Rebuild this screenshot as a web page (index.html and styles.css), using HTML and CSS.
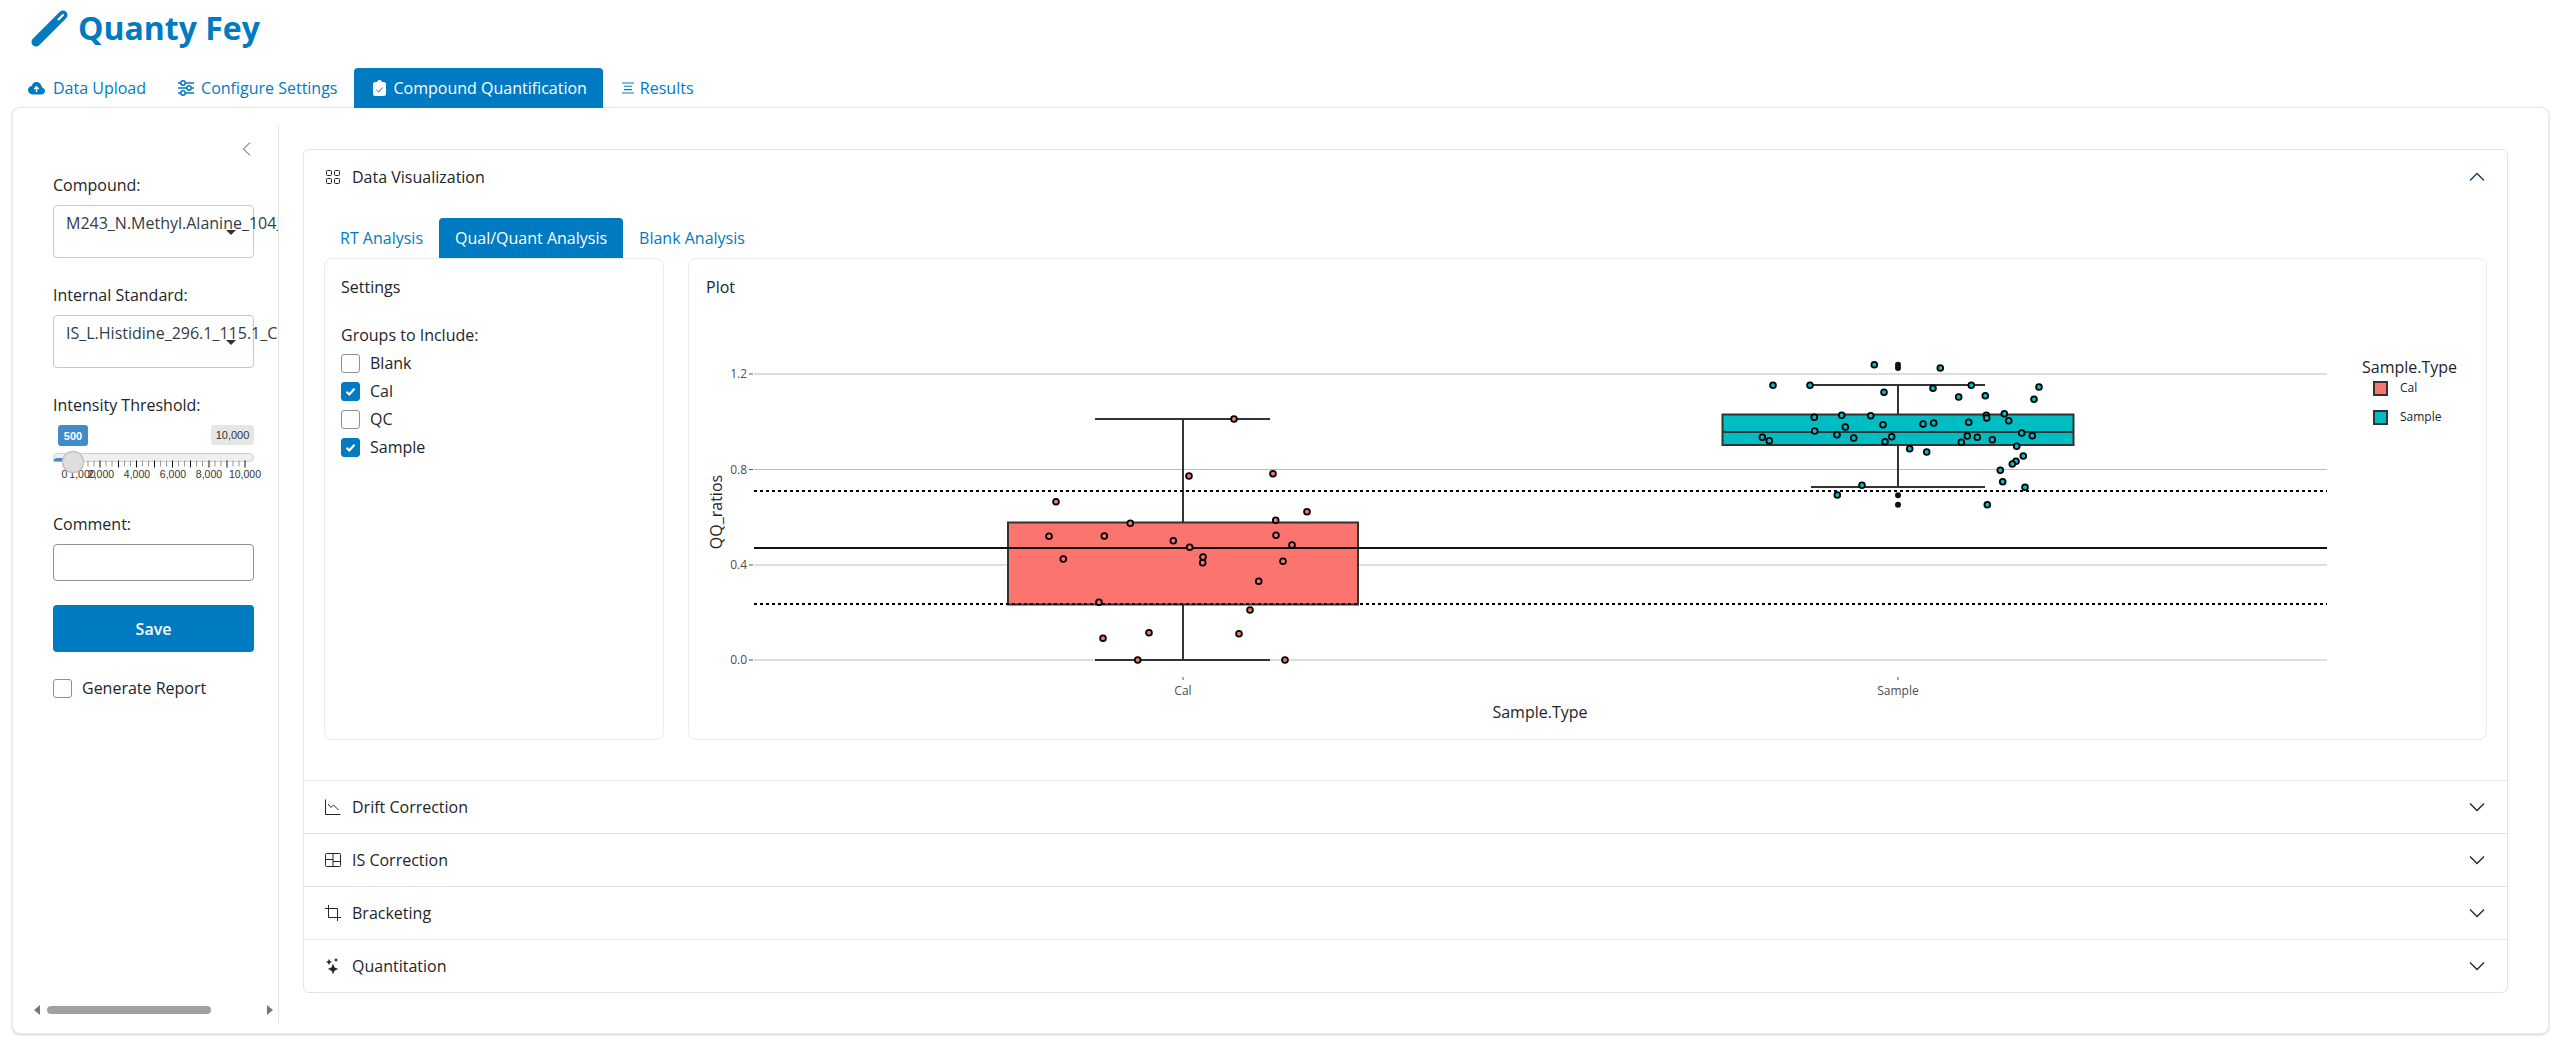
FILE: index.html
```html
<!DOCTYPE html>
<html lang="en">
<head>
<meta charset="utf-8">
<title>Quanty Fey</title>
<link rel="stylesheet" href="styles.css">
</head>
<body>
<header class="brand">
  <svg class="brand-icon" width="40" height="40" viewBox="0 0 40 40"><path class="logo-bar" d="M6 34 L33 7"/><path class="logo-slot" d="M28.500 11.500 L33 7"/></svg>
  <h1 class="brand-name">Quanty Fey</h1>
</header>
<nav class="tabs">
  <a class="tab"><svg class="tab-svg i1" width="20" height="16" viewBox="0 0 20 16"><path d="M8.500 2C6 2 4.300 3.600 3.900 5.700 1.700 6.100 0 7.900 0 10.100 0 12.500 2 14.500 4.400 14.500H13.500C15.500 14.500 17 12.900 17 11 17 9.200 15.700 7.700 14 7.500 13.600 4.400 11.400 2 8.500 2Z"/><path class="cut" d="M8.500 12V7M6.300 9 8.500 6.800 10.700 9"/></svg><span>Data Upload</span></a>
  <a class="tab"><svg class="tab-svg i2" width="18" height="16" viewBox="0 0 18 16"><path class="st" d="M0 3H16M0 8H16M0 13H16"/><circle cx="5" cy="3" r="2.200"/><circle cx="11" cy="8" r="2.200"/><circle cx="5" cy="13" r="2.200"/></svg><span>Configure Settings</span></a>
  <a class="tab tab-active"><svg class="tab-svg i3" width="19" height="16" viewBox="0 0 19 16"><path d="M5 2H7C7.300 .8 8.200 0 9.500 0S11.700 .8 12 2H14C15 2 16 3 16 4V14C16 15 15 16 14 16H5C4 16 3 15 3 14V4C3 3 4 2 5 2Z"/><path class="cut" d="M6.500 9.800 8.800 12 12.500 7.500"/></svg><span>Compound Quantification</span></a>
  <a class="tab"><svg class="tab-svg i4" width="16" height="16" viewBox="0 0 16 16"><path class="st" d="M3 3H15M5 6.300H13M5 9.600H13M3 13H15"/></svg><span>Results</span></a>
</nav>

<main class="card">
  <aside class="sidebar">
    <div class="collapse-row"><svg width="16" height="16" viewBox="0 0 16 16"><path class="chev-side" d="M11 1.500 4.500 8 11 14.500"/></svg></div>
    <div class="sidebar-form">
      <label class="field-label">Compound:</label>
      <div class="select"><span class="select-text">M243_N.Methyl.Alanine_104_44.1_Cal</span><i class="select-arrow"></i></div>
      <label class="field-label label-next">Internal Standard:</label>
      <div class="select"><span class="select-text">IS_L.Histidine_296.1_115.1_Cal</span><i class="select-arrow"></i></div>
      <label class="field-label label-next">Intensity Threshold:</label>
      <svg class="slider" width="225" height="75" viewBox="53 425 225 75">
        <rect x="58" y="425" width="30" height="21" rx="3" class="sl-from"/>
        <text x="73" y="439.500" class="sl-from-t">500</text>
        <rect x="211" y="425" width="43" height="20" rx="3" class="sl-max"/>
        <text x="232.500" y="439" class="sl-max-t">10,000</text>
        <rect x="53.500" y="453.500" width="200" height="8" rx="4" class="sl-track"/>
        <path d="M57 458H66V461.500H53.500C53.500 459.500 55 458 57 458Z" class="sl-fill"/>
        <path class="sl-minor" d="M70 460.500v6M76 460.500v6M88 460.500v6M94 460.500v6M106 460.500v6M112 460.500v6M124.500 460.500v6M130.500 460.500v6M142.500 460.500v6M148.500 460.500v6M160.500 460.500v6M166.500 460.500v6M178.500 460.500v6M184.500 460.500v6M196.500 460.500v6M202.500 460.500v6M215 460.500v6M221 460.500v6M233 460.500v6M239 460.500v6"/>
        <path class="sl-major" d="M64 460.500v7M82 460.500v7M100 460.500v7M118.500 460.500v7M136.500 460.500v7M154.500 460.500v7M172.500 460.500v7M190.500 460.500v7M209 460.500v7M227 460.500v7M245 460.500v7"/>
        <text x="64.500" y="478" class="sl-t">0</text><text x="82.500" y="478" class="sl-t">1,000</text><text x="101" y="478" class="sl-t">2,000</text><text x="137" y="478" class="sl-t">4,000</text><text x="173" y="478" class="sl-t">6,000</text><text x="209" y="478" class="sl-t">8,000</text><text x="245" y="478" class="sl-t">10,000</text>
        <circle cx="73" cy="462" r="10.500" class="sl-handle"/>
      </svg>
      <label class="field-label">Comment:</label>
      <input class="text-input" type="text" aria-label="Comment">
      <button class="save" type="button">Save</button>
      <div class="report"><span class="box"></span><span>Generate Report</span></div>
    </div>
    <div class="scrollbar"><i class="sb-left"></i><div class="sb-track"><div class="sb-thumb"></div></div><i class="sb-right"></i></div>
  </aside>

  <section class="content">
    <div class="accordion">
      <div class="acc-item acc-open">
        <div class="acc-head">
          <svg class="acc-icon" width="16" height="16" viewBox="0 0 16 16"><rect x="1.500" y="1.500" width="5" height="5" rx="1"/><rect x="9.500" y="1.500" width="5" height="5" rx="1"/><rect x="1.500" y="9.500" width="5" height="5" rx="1"/><rect x="9.500" y="9.500" width="5" height="5" rx="1"/></svg>
          <span class="acc-title">Data Visualization</span>
          <svg class="acc-chev acc-chev-open" width="16" height="16" viewBox="0 0 16 16"><path d="M1 11.500 8 4.500 15 11.500"/></svg>
        </div>
        <div class="acc-body">
          <div class="subtabs">
            <a class="subtab">RT Analysis</a>
            <a class="subtab subtab-active">Qual/Quant Analysis</a>
            <a class="subtab">Blank Analysis</a>
          </div>
          <div class="panels">
            <div class="panel panel-settings">
              <div class="panel-title">Settings</div>
              <div class="group-label">Groups to Include:</div>
              <div class="check-row"><span class="box"></span><span>Blank</span></div>
              <div class="check-row"><span class="box box-on"><svg width="13" height="13" viewBox="0 0 13 13"><path d="M2.500 6.800 5.300 9.500 10.500 3.800"/></svg></span><span>Cal</span></div>
              <div class="check-row"><span class="box"></span><span>QC</span></div>
              <div class="check-row"><span class="box box-on"><svg width="13" height="13" viewBox="0 0 13 13"><path d="M2.500 6.800 5.300 9.500 10.500 3.800"/></svg></span><span>Sample</span></div>
            </div>
            <div class="panel panel-plot">
              <div class="panel-title">Plot</div>
              <svg class="plot" width="1796" height="430" viewBox="689 305 1796 430">
                <g class="grid"><path d="M754 374H2327M754 469.500H2327M754 565H2327M754 660H2327"/></g>
                <g class="ticks"><path d="M749 374H753M749 469.500H753M749 565H753M749 660H753M1183 677V680M1898 677V680"/></g>
                <text x="747" y="378" class="tk tk-y">1.2</text><text x="747" y="473.500" class="tk tk-y">0.8</text><text x="747" y="569" class="tk tk-y">0.4</text><text x="747" y="664" class="tk tk-y">0.0</text>
                <text x="1183" y="695" class="tk tk-x">Cal</text><text x="1898" y="695" class="tk tk-x">Sample</text>
                <text x="1540" y="718" class="ax ax-x">Sample.Type</text>
                <text transform="translate(722 512) rotate(-90)" class="ax ax-x">QQ_ratios</text>
                <g class="bx">
                  <path d="M1183 419V522M1183 604.500V660M1095 419H1270M1095 660H1270"/>
                  <rect x="1008" y="522.500" width="350" height="82" class="f-cal"/>
                  <path d="M1898 385V414M1898 445V487M1811 385H1985M1811 487H1985"/>
                  <rect x="1722.500" y="414.500" width="351" height="30.500" class="f-sam"/>
                  <path d="M1722.500 432H2073.500"/>
                </g>
                <path class="solid" d="M754 548H2327"/>
                <path class="dotted" d="M754 491H2327M754 604H2327"/>
                <g class="pts-cal">
                  <circle cx="1056" cy="501.700" r="2.600"/><circle cx="1049" cy="536.300" r="2.600"/><circle cx="1104.300" cy="536" r="2.600"/><circle cx="1130.300" cy="523.300" r="2.600"/><circle cx="1173.300" cy="540.700" r="2.600"/><circle cx="1189.700" cy="547.300" r="2.600"/><circle cx="1203" cy="557" r="2.600"/><circle cx="1202.700" cy="562.700" r="2.600"/><circle cx="1063.300" cy="559" r="2.600"/><circle cx="1099" cy="602.300" r="2.600"/><circle cx="1275.700" cy="520.300" r="2.600"/><circle cx="1307" cy="511.700" r="2.600"/><circle cx="1276" cy="535.300" r="2.600"/><circle cx="1292" cy="545" r="2.600"/><circle cx="1283" cy="561.300" r="2.600"/><circle cx="1258.700" cy="581.300" r="2.600"/><circle cx="1250" cy="610" r="2.600"/><circle cx="1239" cy="633.700" r="2.600"/><circle cx="1149" cy="632.700" r="2.600"/><circle cx="1103" cy="638.300" r="2.600"/><circle cx="1137.700" cy="660" r="2.600"/><circle cx="1285" cy="660" r="2.600"/><circle cx="1234" cy="419" r="2.600"/><circle cx="1189" cy="476" r="2.600"/><circle cx="1273" cy="473.700" r="2.600"/>
                </g>
                <g class="pts-sam">
                  <circle cx="1874.300" cy="364.700" r="2.600"/><circle cx="1940.300" cy="368" r="2.600"/><circle cx="1773" cy="385.300" r="2.600"/><circle cx="1810" cy="385.300" r="2.600"/><circle cx="1884" cy="392.300" r="2.600"/><circle cx="1933" cy="388.300" r="2.600"/><circle cx="1971.300" cy="385.300" r="2.600"/><circle cx="1958.700" cy="397" r="2.600"/><circle cx="1985.300" cy="395.700" r="2.600"/><circle cx="2039" cy="387" r="2.600"/><circle cx="2034" cy="399.300" r="2.600"/><circle cx="1814.300" cy="417.300" r="2.600"/><circle cx="1841.700" cy="415.300" r="2.600"/><circle cx="1870.700" cy="415.700" r="2.600"/><circle cx="1883" cy="424.700" r="2.600"/><circle cx="1845.300" cy="427" r="2.600"/><circle cx="1814.700" cy="431" r="2.600"/><circle cx="1837" cy="434.700" r="2.600"/><circle cx="1853.700" cy="438" r="2.600"/><circle cx="1762.300" cy="437.300" r="2.600"/><circle cx="1769.300" cy="440.700" r="2.600"/><circle cx="1885" cy="441.700" r="2.600"/><circle cx="1891.700" cy="436.700" r="2.600"/><circle cx="1923" cy="424" r="2.600"/><circle cx="1933.700" cy="423" r="2.600"/><circle cx="1968.700" cy="422.300" r="2.600"/><circle cx="1986.300" cy="415.300" r="2.600"/><circle cx="1986.700" cy="418" r="2.600"/><circle cx="2004.300" cy="413.700" r="2.600"/><circle cx="2008.700" cy="420.700" r="2.600"/><circle cx="2021.700" cy="433" r="2.600"/><circle cx="2032.300" cy="435.700" r="2.600"/><circle cx="1967.300" cy="436" r="2.600"/><circle cx="1977.300" cy="437.300" r="2.600"/><circle cx="1961.300" cy="442.300" r="2.600"/><circle cx="1992.300" cy="439.700" r="2.600"/><circle cx="2016.700" cy="446.300" r="2.600"/><circle cx="1909.700" cy="448.700" r="2.600"/><circle cx="1926.700" cy="452" r="2.600"/><circle cx="2023.300" cy="456" r="2.600"/><circle cx="2016" cy="461.300" r="2.600"/><circle cx="2012.300" cy="464" r="2.600"/><circle cx="2000.300" cy="470.300" r="2.600"/><circle cx="2002.700" cy="481.700" r="2.600"/><circle cx="2025" cy="487.300" r="2.600"/><circle cx="1862" cy="485.300" r="2.600"/><circle cx="1837.300" cy="495" r="2.600"/><circle cx="1987.300" cy="504.700" r="2.600"/>
                </g>
                <g class="pts-blk">
                  <circle cx="1898" cy="364.700" r="3"/><circle cx="1898" cy="368" r="3"/><circle cx="1898" cy="495.300" r="3"/><circle cx="1898" cy="504.700" r="3"/>
                </g>
                <text x="2362" y="373" class="lg-title">Sample.Type</text>
                <rect x="2374" y="382" width="13" height="13" class="lg-key f-cal"/>
                <rect x="2374" y="411" width="13" height="13" class="lg-key f-sam"/>
                <text x="2400" y="392" class="lg-t">Cal</text>
                <text x="2400" y="421" class="lg-t">Sample</text>
              </svg>
            </div>
          </div>
        </div>
      </div>
      <div class="acc-item">
        <div class="acc-head">
          <svg class="acc-icon" width="16" height="16" viewBox="0 0 16 16"><path d="M.5.5V15.500H15.500M3 5 6 8.500 8.500 6 13.500 11"/></svg>
          <span class="acc-title">Drift Correction</span>
          <svg class="acc-chev" width="16" height="16" viewBox="0 0 16 16"><path d="M1 4.500 8 11.500 15 4.500"/></svg>
        </div>
      </div>
      <div class="acc-item">
        <div class="acc-head">
          <svg class="acc-icon" width="16" height="16" viewBox="0 0 16 16"><rect x=".5" y="1.500" width="15" height="13" rx="1"/><path d="M.5 7.500H8M8 1.500V14.500M8 9.500H15.500"/></svg>
          <span class="acc-title">IS Correction</span>
          <svg class="acc-chev" width="16" height="16" viewBox="0 0 16 16"><path d="M1 4.500 8 11.500 15 4.500"/></svg>
        </div>
      </div>
      <div class="acc-item">
        <div class="acc-head">
          <svg class="acc-icon" width="16" height="16" viewBox="0 0 16 16"><path d="M3.500 0V12.500H16M0 3.500H12.500V16"/></svg>
          <span class="acc-title">Bracketing</span>
          <svg class="acc-chev" width="16" height="16" viewBox="0 0 16 16"><path d="M1 4.500 8 11.500 15 4.500"/></svg>
        </div>
      </div>
      <div class="acc-item">
        <div class="acc-head">
          <svg class="acc-icon acc-icon-fill" width="16" height="16" viewBox="0 0 16 16"><path d="M7.657 6.247c.11-.33.576-.33.686 0l.645 1.937a2.89 2.89 0 0 0 1.829 1.828l1.936.645c.33.11.33.576 0 .686l-1.937.645a2.89 2.89 0 0 0-1.828 1.829l-.645 1.936a.361.361 0 0 1-.686 0l-.645-1.937a2.89 2.89 0 0 0-1.828-1.828l-1.937-.645a.361.361 0 0 1 0-.686l1.937-.645a2.89 2.89 0 0 0 1.828-1.828zM3.794 1.148a.217.217 0 0 1 .412 0l.387 1.162c.173.518.579.924 1.097 1.097l1.162.387a.217.217 0 0 1 0 .412l-1.162.387A1.73 1.73 0 0 0 4.593 5.690l-.387 1.162a.217.217 0 0 1-.412 0L3.407 5.690A1.730 1.730 0 0 0 2.310 4.593l-1.162-.387a.217.217 0 0 1 0-.412l1.162-.387A1.730 1.730 0 0 0 3.407 2.310zM10.863.099a.145.145 0 0 1 .274 0l.258.774c.115.346.386.617.732.732l.774.258a.145.145 0 0 1 0 .274l-.774.258a1.160 1.160 0 0 0-.732.732l-.258.774a.145.145 0 0 1-.274 0l-.258-.774a1.160 1.160 0 0 0-.732-.732L9.100 2.137a.145.145 0 0 1 0-.274l.774-.258c.346-.115.617-.386.732-.732z"/></svg>
          <span class="acc-title">Quantitation</span>
          <svg class="acc-chev" width="16" height="16" viewBox="0 0 16 16"><path d="M1 4.500 8 11.500 15 4.500"/></svg>
        </div>
      </div>
    </div>
  </section>
</main>
</body>
</html>
```

FILE: styles.css
```css
* { box-sizing: border-box; }
html, body { margin: 0; height: 100%; }
body { font-family: "Open Sans", "Noto Sans", sans-serif; font-size: 16px; line-height: 24px; color: #212529; background: #fff; overflow: hidden; }

.brand { display: flex; align-items: center; height: 68px; padding: 0 0 12px 30px; gap: 8px; }
.brand-icon { flex: none; }
.logo-bar { fill: none; stroke: #007bc2; stroke-width: 9; stroke-linecap: round; }
.logo-slot { fill: none; stroke: #fff; stroke-width: 2; stroke-linecap: round; }
.brand-name { margin: 0; color: #007bc2; font-size: 32px; line-height: 40px; font-weight: 700; }

.tabs { display: flex; height: 40px; padding-left: 12px; }
.tab { display: flex; align-items: center; gap: 5px; padding: 0 16px; color: #007bc2; border-radius: 4px 4px 0 0; white-space: nowrap; }
.tab-active { background: #007bc2; color: #fff; }
.tab-svg { flex: none; fill: currentColor; }
.st { fill: none; stroke: currentColor; stroke-width: 1.5; }
.i4 .st { stroke-width: 1.1; }
.i2 circle { fill: #fff; stroke: currentColor; stroke-width: 1.5; }
.cut { fill: none; stroke: #fff; stroke-width: 1.4; }
.i3 .cut { stroke: #007bc2; stroke-width: 1; }

.card { display: flex; width: 2537px; height: 927px; margin: -1px 0 0 12px; background: #fff; border: 1px solid #e6e8ea; border-radius: 8px; box-shadow: 0 1px 3px rgba(0, 0, 0, .18); }

.sidebar { display: flex; flex-direction: column; width: 266px; flex: none; margin-top: 17px; margin-bottom: 10px; border-right: 1px solid #e3e5e8; overflow: hidden; }
.collapse-row { display: flex; justify-content: flex-end; height: 32px; padding: 16px 23px 0 0; }
.chev-side { fill: none; stroke: #495057; stroke-width: 1; }
.sidebar-form { display: flex; flex-direction: column; padding: 16px 0 0 40px; width: 265px; }
.field-label { display: block; height: 24px; margin-bottom: 8px; }
.label-next { margin-top: 25px; }
.select { position: relative; width: 201px; height: 53px; padding: 5px 0 0 12px; border: 1px solid #c9c9c9; border-radius: 4px; white-space: nowrap; color: #333c49; }
.select-text { display: block; }
.select-arrow { position: absolute; left: 172px; top: 24px; border-style: solid; border-width: 5px 5px 0; border-color: #333 transparent transparent; }
.slider { display: block; overflow: visible; margin-bottom: 12px; }
.sl-from { fill: #428bca; }
.sl-from-t { fill: #fff; font: 700 11px "Liberation Sans", sans-serif; text-anchor: middle; }
.sl-max { fill: #e6e6e6; }
.sl-max-t { fill: #333; font: 11px "Liberation Sans", sans-serif; text-anchor: middle; }
.sl-track { fill: #efefef; stroke: #cfcfcf; }
.sl-fill { fill: #428bca; }
.sl-minor { stroke: #999; fill: none; }
.sl-major { stroke: #111; fill: none; }
.sl-t { fill: #333; font: 10.500px "Liberation Sans", sans-serif; text-anchor: middle; }
.sl-handle { fill: #dedede; stroke: #c4c4c4; stroke-width: 1.5; }
.text-input { display: block; width: 201px; height: 37px; border: 1px solid #8a929a; border-radius: 4px; background: #fff; }
.save { display: block; width: 201px; height: 47px; margin-top: 24px; border: 0; border-radius: 4px; background: #007bc2; color: #fff; font: 600 16px/24px "Open Sans", sans-serif; }
.report { display: flex; align-items: center; gap: 10px; height: 24px; margin-top: 24px; }
.box { display: flex; align-items: center; justify-content: center; width: 19px; height: 19px; flex: none; border: 1px solid #8a9097; border-radius: 3px; background: #fff; }
.box-on { background: #007bc2; border-color: #007bc2; }
.box-on svg { fill: none; stroke: #fff; stroke-width: 2.2; }
.scrollbar { display: flex; align-items: center; gap: 7px; height: 10px; margin-top: auto; margin-bottom: 8px; padding: 0 5px 0 21px; }
.sb-left { border-style: solid; border-width: 5px 6px 5px 0; border-color: transparent #777 transparent transparent; }
.sb-right { border-style: solid; border-width: 5px 0 5px 6px; border-color: transparent transparent transparent #777; }
.sb-track { flex: 1; height: 8px; }
.sb-thumb { width: 164px; height: 8px; border-radius: 4px; background: #a1a1a1; }

.content { flex: 1; min-width: 0; padding: 41px 40px 0 24px; }
.accordion { border: 1px solid #e0e3e7; border-radius: 6px; height: 844px; display: flex; flex-direction: column; }
.acc-item { height: 53px; border-top: 1px solid #e0e3e7; flex: none; }
.acc-item:first-child { border-top: 0; }
.acc-open { height: 630px; }
.acc-head { display: flex; align-items: center; height: 52px; padding: 0 22px 0 21px; gap: 11px; }
.acc-open .acc-head { height: 54px; }
.acc-icon { flex: none; fill: none; stroke: #212529; stroke-width: 1; }
.acc-icon-fill { fill: #212529; stroke: none; }
.acc-title { flex: 1; }
.acc-chev { flex: none; fill: none; stroke: #212529; stroke-width: 1.300; }
.acc-chev-open { stroke: #0b3f63; }
.acc-body { padding: 14px 20px 0; }
.subtabs { display: flex; height: 40px; }
.subtab { display: flex; align-items: center; padding: 0 16px; color: #007bc2; white-space: nowrap; border-radius: 4px 4px 0 0; }
.subtab-active { background: #007bc2; color: #fff; }
.panels { display: grid; grid-template-columns: 340px 1fr; gap: 24px; height: 482px; }
.panel { border: 1px solid #e9ebee; border-radius: 8px; padding: 16px; min-width: 0; }
.panel-plot { padding: 16px 0 0; }
.panel-plot .panel-title { padding-left: 17px; height: 30px; }
.plot { display: block; }
.group-label { margin-top: 24px; height: 26px; }
.panel-title { height: 24px; }
.check-row { display: flex; align-items: center; gap: 10px; height: 28px; }

.grid path { stroke: #bdbdbd; stroke-width: 1.200; fill: none; }
.ticks path { stroke: #555; stroke-width: 1; fill: none; }
.tk { fill: #4d4d4d; font: 12px "Open Sans", sans-serif; }
.tk-y { text-anchor: end; }
.tk-x { text-anchor: middle; }
.ax { fill: #212529; font: 16px "Open Sans", sans-serif; }
.ax-x { text-anchor: middle; }
.bx path { stroke: #333; stroke-width: 2; fill: none; }
.bx rect { stroke: #333; stroke-width: 2; }
.f-cal { fill: #fb746d; }
.f-sam { fill: #00bdc4; }
.solid { stroke: #111; stroke-width: 2; fill: none; }
.dotted { stroke: #000; stroke-width: 2; stroke-dasharray: 3 3; fill: none; }
.pts-cal circle { r: 2.900px; fill: #f8766d; stroke: #000; stroke-width: 1.800; }
.pts-sam circle { r: 2.900px; fill: #00bfc4; stroke: #000; stroke-width: 1.800; }
.pts-blk circle { fill: #111; }
.lg-title { fill: #212529; font: 16px "Open Sans", sans-serif; }
.lg-t { fill: #212529; font: 12px "Open Sans", sans-serif; }
.lg-key { stroke: #333; stroke-width: 2; }
```
